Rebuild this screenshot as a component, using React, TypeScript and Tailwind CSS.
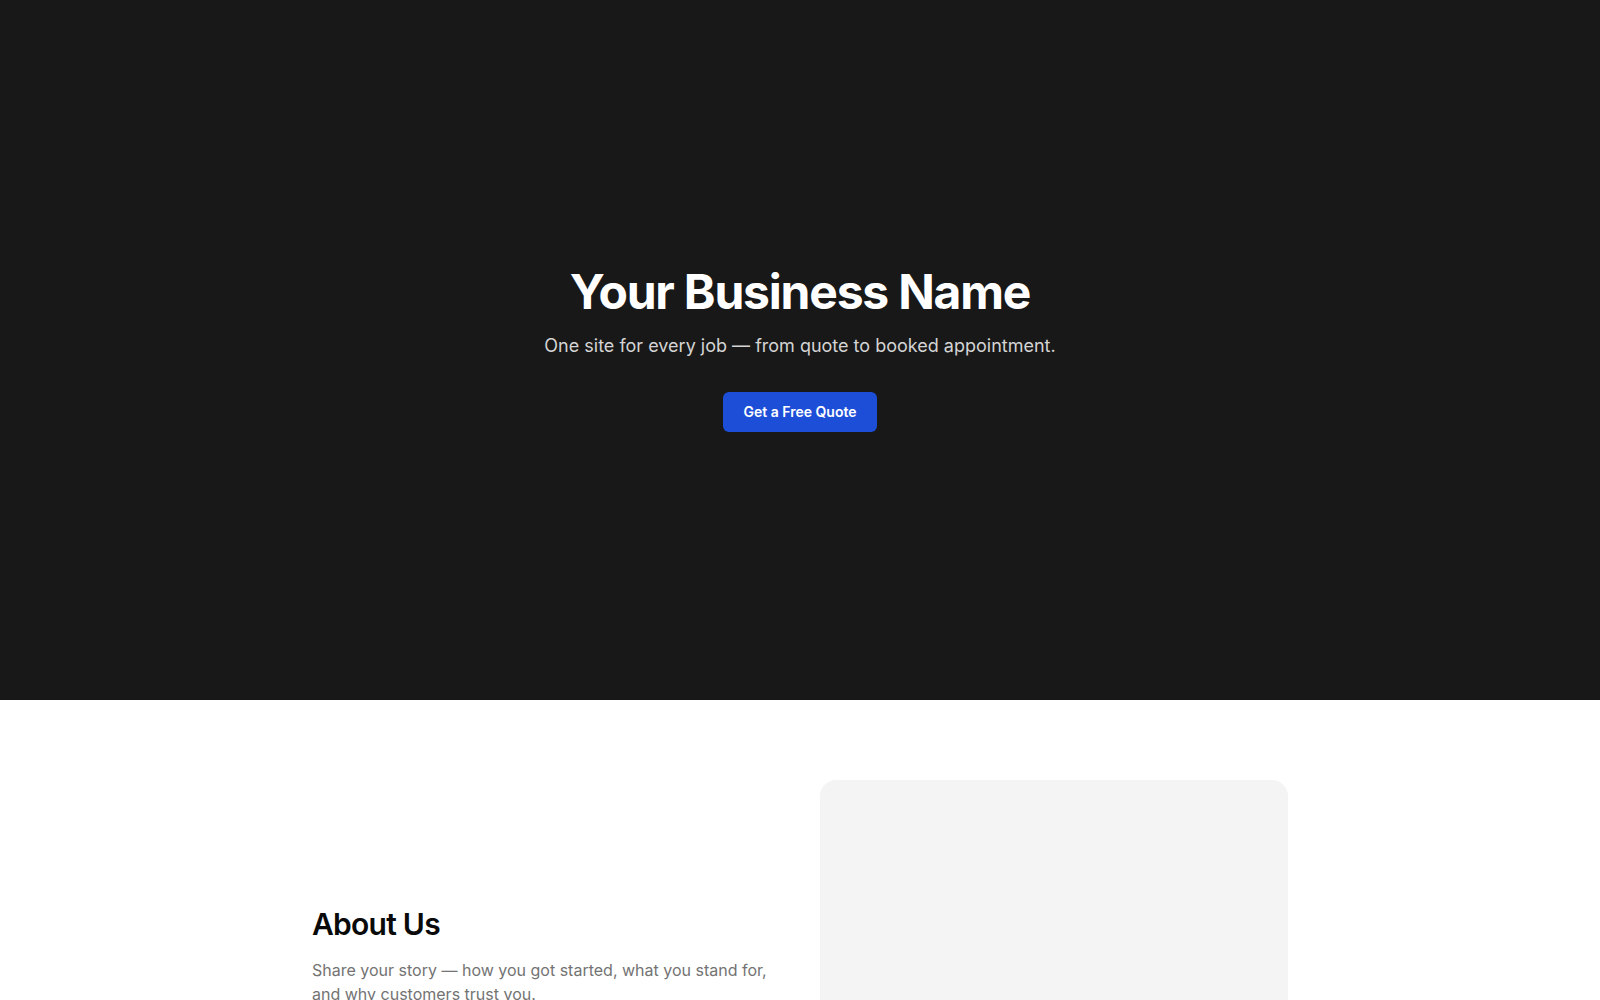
import React from 'react';

const Hero: React.FC = () => (
  <section className="flex h-[700px] flex-col items-center justify-center bg-[#181818] px-6 text-center">
    <h1 className="text-5xl font-bold tracking-tight text-white">Your Business Name</h1>
    <p className="mt-4 text-lg text-neutral-300">
      One site for every job — from quote to booked appointment.
    </p>
    <a
      href="#quote"
      className="mt-8 rounded-md bg-[#1d4ed8] px-5 py-2.5 text-sm font-semibold text-white"
    >
      Get a Free Quote
    </a>
  </section>
);

const About: React.FC = () => (
  <section className="bg-white py-20">
    <div className="mx-auto grid max-w-5xl grid-cols-2 items-center gap-10 px-6">
      <div>
        <h2 className="text-3xl font-semibold tracking-tight text-neutral-950">About Us</h2>
        <p className="mt-4 text-base text-neutral-500">
          Share your story — how you got started, what you stand for, and why customers trust you.
        </p>
      </div>
      {/* photo placeholder */}
      <div className="aspect-[4/3] rounded-2xl bg-[#f4f4f4]" />
    </div>
  </section>
);

export default function App() {
  return (
    <main className="min-h-screen bg-white font-['Inter',sans-serif]">
      <Hero />
      <About />
    </main>
  );
}
